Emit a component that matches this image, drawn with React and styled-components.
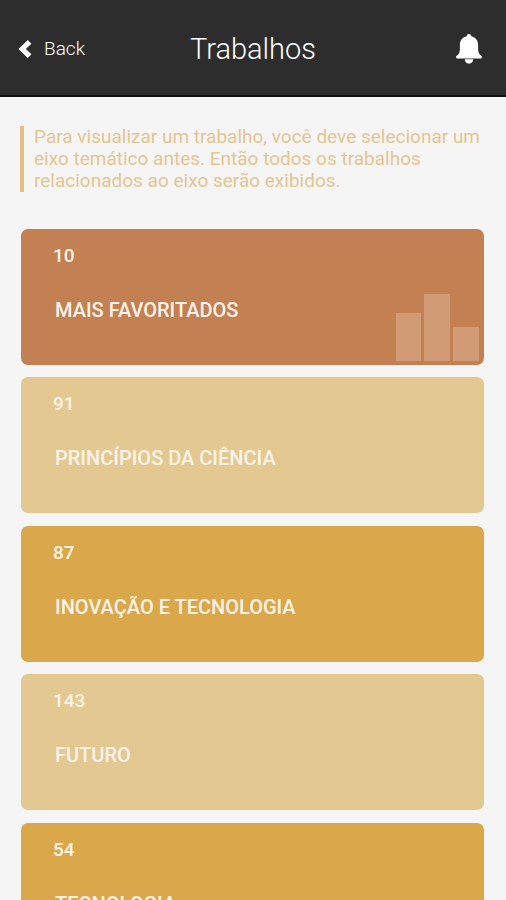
import React from 'react';
import styled, { createGlobalStyle } from 'styled-components';

const axes = [
  { total: 10, name: 'MAIS FAVORITADOS', tone: 'copper', chart: true },
  { total: 91, name: 'PRINCÍPIOS DA CIÊNCIA', tone: 'sand' },
  { total: 87, name: 'INOVAÇÃO E TECNOLOGIA', tone: 'gold' },
  { total: 143, name: 'FUTURO', tone: 'sand' },
  { total: 54, name: 'TECNOLOGIA', tone: 'gold' },
];

const tones = {
  copper: '#c38053',
  sand: '#e4c892',
  gold: '#dba74b',
};

const App = () => (
  <Page>
    <GlobalStyle />
    <Header>
      <BackButton type="button">
        <Chevron />
        Back
      </BackButton>
      <Title>Trabalhos</Title>
      <BellButton type="button" aria-label="Notificações">
        <Bell />
      </BellButton>
    </Header>
    <Content>
      <Hint>
        Para visualizar um trabalho, você deve selecionar um eixo temático
        antes. Então todos os trabalhos relacionados ao eixo serão exibidos.
      </Hint>
      <AxisList>
        {axes.map((axis) => (
          <li key={axis.name}>
            <AxisCard type="button" $tone={axis.tone}>
              <Total>{axis.total}</Total>
              <AxisName>{axis.name}</AxisName>
              {axis.chart && <Chart />}
            </AxisCard>
          </li>
        ))}
      </AxisList>
    </Content>
  </Page>
);

const Chevron = () => (
  <svg width="14" height="20" viewBox="0 0 14 20" aria-hidden="true">
    <path
      d="M11.6 2.800 4.200 10l7.400 7.200"
      fill="none"
      stroke="currentColor"
      strokeWidth="5.2"
    />
  </svg>
);

const Bell = () => (
  <svg width="26" height="30" viewBox="0 0 26 30" aria-hidden="true">
    <path
      fill="currentColor"
      d="M13 0c1.300 0 2.200.9 2.200 2.200 4.300.9 6.900 4.100 6.900 8.400v4.400c0 3.400 1 5.100 3.200 6.700.5.400.7.800.7 1.300 0 .9-.6 1.500-1.500 1.500h-23C.6 24.500 0 23.900 0 23c0-.5.200-.9.700-1.300 2.200-1.600 3.200-3.300 3.200-6.700v-4.400c0-4.300 2.600-7.500 6.900-8.400C10.800.9 11.700 0 13 0z"
    />
    <path fill="currentColor" d="M8.800 25.300h8.400c0 2.500-1.800 4.400-4.200 4.400s-4.200-1.900-4.200-4.400z" />
  </svg>
);

const Chart = () => (
  <ChartIcon viewBox="0 0 83 67" aria-hidden="true">
    <rect x="0" y="19" width="25" height="48" />
    <rect x="28" y="0" width="26" height="67" />
    <rect x="57" y="33" width="26" height="34" />
  </ChartIcon>
);

const GlobalStyle = createGlobalStyle`
  * {
    box-sizing: border-box;
  }

  body {
    margin: 0;
    background: #f5f5f5;
    font-family: Roboto, "Liberation Sans", sans-serif;
  }

  button {
    padding: 0;
    border: 0;
    background: none;
    font: inherit;
    cursor: pointer;
  }
`;

const Page = styled.div`
  width: 100%;
  height: 100vh;
  overflow: hidden auto;
  scrollbar-width: none;
`;

const Header = styled.header`
  display: grid;
  grid-template-columns: 1fr auto 1fr;
  align-items: center;
  height: 97px;
  padding: 2px 18px 0;
  border-bottom: 2px solid #111;
  background: #2d2d2d;
  color: #fff;
`;

const BackButton = styled.button`
  display: flex;
  align-items: center;
  justify-self: start;
  gap: 12px;

  && {
    color: #fff;
    font-size: 19px;
    font-weight: 300;
  }
`;

const Title = styled.h1`
  margin: 0;
  font-size: 29px;
  font-weight: 300;
  line-height: 36px;
`;

const BellButton = styled.button`
  display: flex;
  justify-self: end;

  && {
    padding: 0 6px;
    color: #fff;
  }
`;

const Content = styled.main`
  padding: 29px 22px 24px 20px;
`;

const Hint = styled.p`
  margin: 0 0 37px;
  padding-left: 10px;
  border-left: 4px solid #e5bf82;
  color: #e5c590;
  font-size: 19px;
  line-height: 22px;
`;

const AxisList = styled.ul`
  margin: 0;
  padding: 0 0 0 1px;
  list-style: none;
`;

const AxisCard = styled.button`
  position: relative;
  display: flex;
  flex-direction: column;
  gap: 32px;
  width: 100%;
  height: 136px;
  margin-bottom: ${({ $tone }) => ($tone === 'sand' ? 13 : 12)}px;

  && {
    padding: 16px 32px;
    border-radius: 7px;
    background: ${({ $tone }) => tones[$tone]};
    color: #fbf3e8;
    font-weight: 500;
    line-height: 22px;
    text-align: left;
  }
`;

const Total = styled.span`
  font-size: 19px;
`;

const AxisName = styled.span`
  padding-left: 2px;
  font-size: 20px;
`;

const ChartIcon = styled.svg`
  position: absolute;
  right: 5px;
  bottom: 4px;
  width: 83px;
  height: 67px;
  fill: #d19b75;
`;

export default App;
